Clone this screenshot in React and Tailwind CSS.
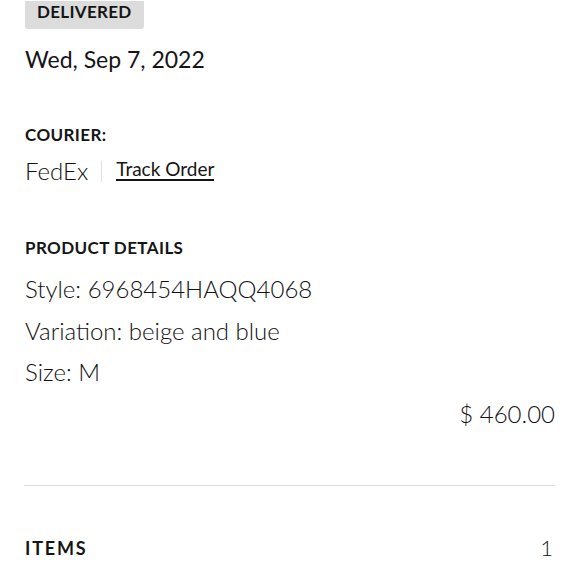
export default function App() {
  return (
    <div className="w-[580px] h-[580px] overflow-hidden bg-white text-[#151515]" style={{ fontFamily: "Lato, 'Noto Sans', sans-serif" }}>
      <div className="px-[25px]">
        <div className="inline-flex items-start h-[28px] px-[12px] bg-[#dcdcdc] rounded-b-[3px]">
          <span className="block text-[17px] leading-[22px] font-bold tracking-[0.3px]">DELIVERED</span>
        </div>
        <div className="mt-[16px] text-[23px] leading-[28px] font-normal">Wed, Sep 7, 2022</div>

        <div className="mt-[52px] text-[17px] leading-[20px] font-bold tracking-[0.4px]">COURIER:</div>
        <div className="mt-[11px] flex items-start h-[30px]">
          <span className="text-[24px] leading-[30px] font-light text-[#111]">FedEx</span>
          <span className="mt-[5px] ml-[13px] mr-[14px] w-px h-[21px] bg-[#e0e0e0]"></span>
          <span className="mt-[2px] text-[19px] leading-[21px] font-normal border-b-2 border-[#151515]">Track Order</span>
        </div>

        <div className="mt-[52px] text-[17px] leading-[20px] font-bold tracking-[0.4px]">PRODUCT DETAILS</div>
        <div className="mt-[10px] flex flex-col text-[24px] leading-[41.5px] font-light text-[#111]">
          <span>Style: 6968454HAQQ4068</span>
          <span>Variation: beige and blue</span>
          <span>Size: M</span>
          <span className="text-right">$ 460.00</span>
        </div>

        <div className="mt-[51px] h-px bg-[#dddddd] -ml-px"></div>

        <div className="mt-[50px] flex justify-between items-center h-[24px]">
          <span className="text-[18px] leading-[24px] font-bold tracking-[1.8px]">ITEMS</span>
          <span className="text-[22px] leading-[24px] mr-[2px] font-light text-[#111]">1</span>
        </div>
      </div>
    </div>
  );
}
